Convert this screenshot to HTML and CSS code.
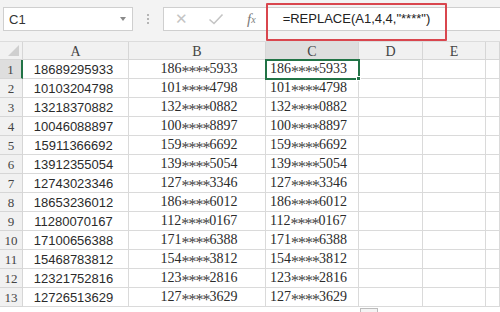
FILE: index.html
```html
<!DOCTYPE html>
<html lang="en">

<head>
    <meta charset="UTF-8">
    <title>REPLACE phone mask</title>
    <link rel="stylesheet" href="styles.css">
</head>

<body>

    <div class="toolbar">
        <div class="name-box">
            <span>C1</span>
            <span class="caret"></span>
        </div>
        <div class="grip"><i></i><i></i><i></i></div>
        <div class="formula-box">
            <span class="tool cancel">&#x2715;</span>
            <span class="tool enter">
                <svg width="16" height="12" viewBox="0 0 16 12"><path d="M1.5 6.5 L6 10.5 L14.5 1.5" fill="none" stroke="#c4c4c4" stroke-width="1.6"/></svg>
            </span>
            <span class="tool fx">f<sub>x</sub></span>
            <div class="formula-input">=REPLACE(A1,4,4,"****")</div>
        </div>
    </div>

    <div class="sheet" id="sheet">
        <div class="corner"><span class="tri"></span></div>
        <div class="col-head">A</div>
        <div class="col-head">B</div>
        <div class="col-head active">C</div>
        <div class="col-head">D</div>
        <div class="col-head">E</div>
        <div class="col-head"></div>
    </div>

    <div class="paste-tab"></div>

    <script>
        const phones = [
            "18689295933", "10103204798", "13218370882", "10046088897",
            "15911366692", "13912355054", "12743023346", "18653236012",
            "11280070167", "17100656388", "15468783812", "12321752816",
            "12726513629"
        ];

        const sheet = document.getElementById("sheet");

        function cell(cls, text) {
            const div = document.createElement("div");
            div.className = cls;
            div.textContent = text;
            sheet.appendChild(div);
            return div;
        }

        function maskedCell(cls, phone) {
            const div = cell(cls, "");
            div.append(phone.slice(0, 3));
            const stars = document.createElement("span");
            stars.className = "stars";
            stars.textContent = "****";
            div.appendChild(stars);
            div.append(phone.slice(7));
            return div;
        }

        phones.forEach((phone, i) => {
            cell("row-head" + (i === 0 ? " active" : ""), i + 1);
            cell("cell num", phone);
            maskedCell("cell masked center", phone);
            const c = maskedCell("cell masked left" + (i === 0 ? " selected" : ""), phone);
            if (i === 0) {
                const handle = document.createElement("span");
                handle.className = "handle";
                c.appendChild(handle);
            }
            cell("cell", "");
            cell("cell", "");
            cell("cell", "");
        });
    </script>

</body>

</html>
```

FILE: styles.css
```css
* {
    box-sizing: border-box;
}

body {
    margin: 0;
    background: #fff;
    font-family: 'Liberation Sans', Arial, sans-serif;
    color: #333;
    overflow: hidden;
    width: 500px;
    height: 312px;
    position: relative;
}

/* formula bar */
.toolbar {
    height: 42px;
    background: #f3f3f3;
    display: flex;
    align-items: flex-start;
    padding-top: 7px;
    border-bottom: 1px solid #dcdcdc;
}

.name-box {
    margin-left: 3px;
    width: 130px;
    height: 24px;
    background: #fff;
    border: 1px solid #cfcfcf;
    display: flex;
    align-items: center;
    justify-content: space-between;
    padding: 0 6px 0 5px;
    font-size: 13px;
}

.caret {
    width: 0;
    height: 0;
    border-left: 3px solid transparent;
    border-right: 3px solid transparent;
    border-top: 4px solid #8a8a8a;
}

.grip {
    width: 30px;
    height: 24px;
    display: flex;
    flex-direction: column;
    align-items: center;
    justify-content: center;
    gap: 2px;
}

.grip i {
    width: 2px;
    height: 2px;
    background: #b5b5b5;
}

.formula-box {
    flex: 1;
    height: 24px;
    background: #fff;
    border: 1px solid #cfcfcf;
    border-right: none;
    display: flex;
    align-items: center;
}

.tool {
    color: #c4c4c4;
    display: flex;
    align-items: center;
    justify-content: center;
}

.cancel {
    width: 18px;
    margin-left: 8px;
    font-size: 15px;
}

.enter {
    width: 18px;
    margin-left: 17px;
}

.fx {
    margin-left: 22px;
    font-family: 'Liberation Serif', serif;
    font-style: italic;
    font-size: 15px;
    color: #7a7a7a;
}

.fx sub {
    font-size: 10px;
    vertical-align: -1px;
}

.formula-input {
    position: relative;
    margin-left: 10px;
    padding-left: 17px;
    width: 177px;
    height: 22px;
    line-height: 22px;
    font-size: 13px;
    color: #222;
    white-space: nowrap;
}

.formula-input::after {
    content: "";
    position: absolute;
    left: 0;
    top: -5px;
    width: 177px;
    height: 34px;
    border: 2px solid #d9464e;
    border-radius: 1px;
}

/* grid */
.sheet {
    display: grid;
    grid-template-columns: 23px 106px 137px 93px 64px 63px 14px;
    grid-template-rows: 18px repeat(13, 19px);
}

.corner,
.col-head,
.row-head {
    background: #f1f1f1;
    border-right: 1px solid #d6d6d6;
    border-bottom: 1px solid #d6d6d6;
    color: #444;
    font-family: 'Liberation Serif', serif;
    font-size: 14px;
    display: flex;
    align-items: center;
    justify-content: center;
}

.col-head {
    padding-top: 2px;
}

.corner {
    position: relative;
}

.tri {
    position: absolute;
    right: 3px;
    bottom: 3px;
    width: 0;
    height: 0;
    border-left: 11px solid transparent;
    border-bottom: 11px solid #cfcfcf;
}

.col-head.active {
    background: #dedede;
    border-bottom: 1px solid #bdbdbd;
}

.row-head {
    font-size: 13px;
    padding-top: 1px;
}

.row-head.active {
    background: #dedede;
    border-right: 2px solid #217346;
}

.cell {
    border-right: 1px solid #dadada;
    border-bottom: 1px solid #dadada;
    display: flex;
    align-items: center;
    white-space: nowrap;
    position: relative;
}

.num {
    justify-content: center;
    font-size: 13px;
    color: #2b2b2b;
    padding-right: 4px;
}

.masked {
    font-family: 'Liberation Serif', serif;
    font-size: 14px;
    color: #2b2b2b;
}

.stars {
    display: inline-block;
    width: 28px;
    font-size: 16px;
    letter-spacing: -1px;
    line-height: 1;
    transform: translateY(3px);
    color: #444;
}

.center {
    justify-content: center;
    padding-left: 4px;
}

.left {
    padding-left: 4px;
}

.selected {
    outline: 2px solid #217346;
    outline-offset: -1px;
    z-index: 1;
}

.handle {
    position: absolute;
    right: -3px;
    bottom: -3px;
    width: 5px;
    height: 5px;
    background: #217346;
    border: 1px solid #fff;
}

.paste-tab {
    position: absolute;
    left: 360px;
    top: 308px;
    width: 18px;
    height: 10px;
    border: 1px solid #bcbcbc;
    background: #f4f4f4;
}
```
